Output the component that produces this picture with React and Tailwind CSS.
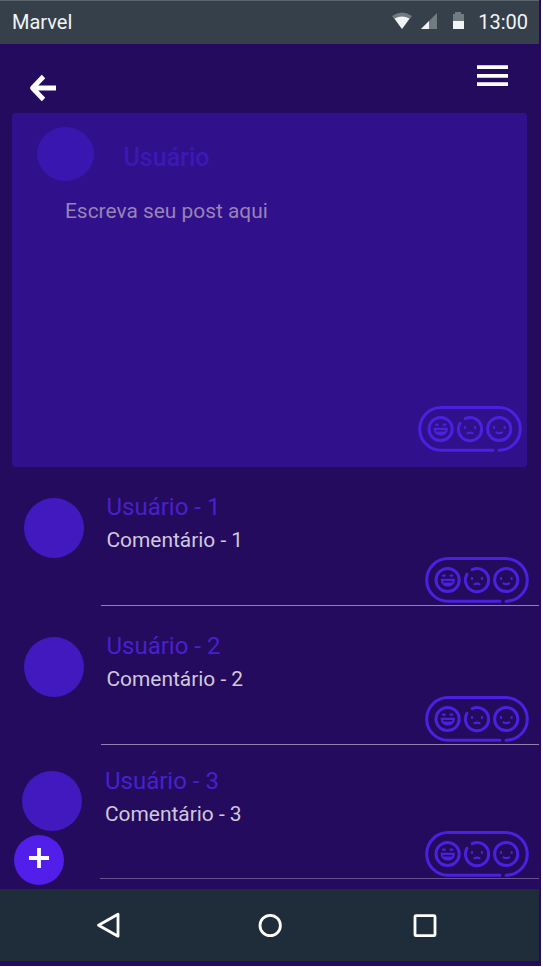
function Reactions({ className = "" }) {
  return (
    <svg className={"h-[46px] w-[104px] shrink-0 " + className} viewBox="0 0 104 46" fill="none" stroke="#4d20df" strokeWidth="3" strokeLinecap="round">
      <path d="M75 44.2H23a21.2 21.2 0 0 1 0-42.6h58a21.3 21.3 0 0 1 0 42.6" />
      <circle cx="22.6" cy="23" r="11.6" />
      <path d="M42 17.3a11.6 11.6 0 1 0 5.2-4.7" />
      <circle cx="81.2" cy="23" r="11.6" />
      <g strokeWidth="2.2">
        <path d="M18 18.7h1.8M25.5 18.7h1.8M16.8 22.8h12c-.2 7.6-11.8 7.6-12 0zM19.5 26.5h6.6" />
        <path d="M47 21.2v.7M57 21.2v.7M49.5 27.2q2.5-1.2 5 0M76 21.2v.7M86.6 21.2v.7M78.6 26.4q2.7 1.4 5.4 0" />
      </g>
    </svg>
  );
}

function Comment({ n, height, shift, line, titleGap }) {
  return (
    <article className={"flex w-[538.5px] " + height + " " + shift}>
      <div className="mt-[14.5px] size-[60px] shrink-0 rounded-full bg-[#4119bf]" />
      <div className={"ml-[17.5px] flex flex-1 flex-col border-b " + line}>
        <div className={"ml-[5.5px] text-[24px] leading-[30px] text-[#4820cd] " + titleGap}>Usuário - {n}</div>
        <div className="ml-[5.5px] mt-[3px] text-[20.9px] leading-[30px] text-[#d0c8dc]">Comentário - {n}</div>
        <Reactions className="mt-auto mb-[1.5px] ml-auto mr-[9.5px]" />
      </div>
    </article>
  );
}

export default function App() {
  return (
    <div className="h-[967px] w-[543px] bg-white font-['Roboto',sans-serif]">
      <div className="h-[966px] w-[541px] overflow-hidden bg-[#240b5e]">
        <header className="flex h-[44px] w-[539px] items-center border-t border-[#5b6570] bg-[#36404b] pb-[1px] pl-3 pr-[11px] text-[20px] text-[#f2f4f5]">
          <span>Marvel</span>
          <svg className="ml-auto h-[20px] w-[76px]" viewBox="0 0 76 20">
            <path fill="#737b82" d="M0 4q10-7 20 0L10 17z" />
            <path fill="#f1f3f4" d="M2.5 6.5q7.5-4 15 0L10 17z" />
            <path fill="#737b82" d="M45 1v16H29z" />
            <path fill="#f1f3f4" d="M37 9v8h-8z" />
            <path fill="#737b82" d="M63 0h6v2h3v8H61V2h2z" />
            <path fill="#f1f3f4" d="M61 9h11v8H61z" />
          </svg>
          <span className="ml-[10px]">13:00</span>
        </header>
        <nav className="flex h-[69px] justify-between pl-[29px] pr-[33px]">
          <svg className="mt-[30px] h-[28px] w-[28px]" viewBox="0 0 28 28" fill="none" stroke="white" strokeWidth="4.8">
            <path d="M27 14H4M14.5 2.5 3.5 14l11 11.5" strokeLinejoin="round" />
          </svg>
          <svg className="mt-[21px] h-[22px] w-[31px]" viewBox="0 0 31 22" fill="white">
            <path d="M0 .3h31v3.7H0zM0 9h31v3.7H0zM0 17.3h31v3.7H0z" />
          </svg>
        </nav>
        <section className="ml-[11.5px] flex h-[354px] w-[515.5px] flex-col rounded-[3px] bg-[#30108b]">
          <div className="flex pl-[25.5px] pt-[13.5px]">
            <div className="h-[54px] w-[57px] rounded-[50%] bg-[#3a16b0]" />
            <div className="ml-[29.5px] mt-[15.5px] text-[25px] font-medium leading-[32px] text-[#3c19b7]">Usuário</div>
          </div>
          <div className="ml-[53.5px] mt-[15.5px] text-[20.9px] leading-[30px] text-[#9983b5]">Escreva seu post aqui</div>
          <Reactions className="ml-auto mr-[5px] mt-auto mb-[15px]" />
        </section>
        <main className="relative flex h-[422px] flex-col pt-[16px]">
          <Comment n={1} height="h-[122.5px]" shift="pl-[23.5px]" line="border-[#9380ad]" titleGap="mt-[9px]" />
          <Comment n={2} height="h-[122.5px] mt-[16.5px]" shift="pl-[23.5px]" line="border-[#9380ad]" titleGap="mt-[9px]" />
          <Comment n={3} height="h-[122.5px] mt-[12px]" shift="pl-[22px]" line="border-[#67518f]" titleGap="mt-[9.5px]" />
          <button aria-label="+" className="absolute left-[14px] top-[367.5px] flex size-[50px] items-center justify-center rounded-full bg-[#511eea]">
            <svg className="mr-[1px] mb-[3px] size-[20px]" viewBox="0 0 20 20" stroke="white" strokeWidth="3.8"><path d="M10 0v20M0 10h20" /></svg>
          </button>
        </main>
        <footer className="flex h-[72px] w-[539px] items-center bg-[#1f2c3a] pl-[96px]">
          <svg className="h-[28px] w-[342px]" viewBox="0 0 342 28" fill="none" stroke="white" strokeWidth="2.8">
            <path strokeLinejoin="round" d="M22 3.2v22L2.5 14.2z" />
            <circle cx="174.2" cy="14.5" r="10.2" />
            <rect x="319" y="4.7" width="20" height="20" rx="1" />
          </svg>
        </footer>
      </div>
    </div>
  );
}
